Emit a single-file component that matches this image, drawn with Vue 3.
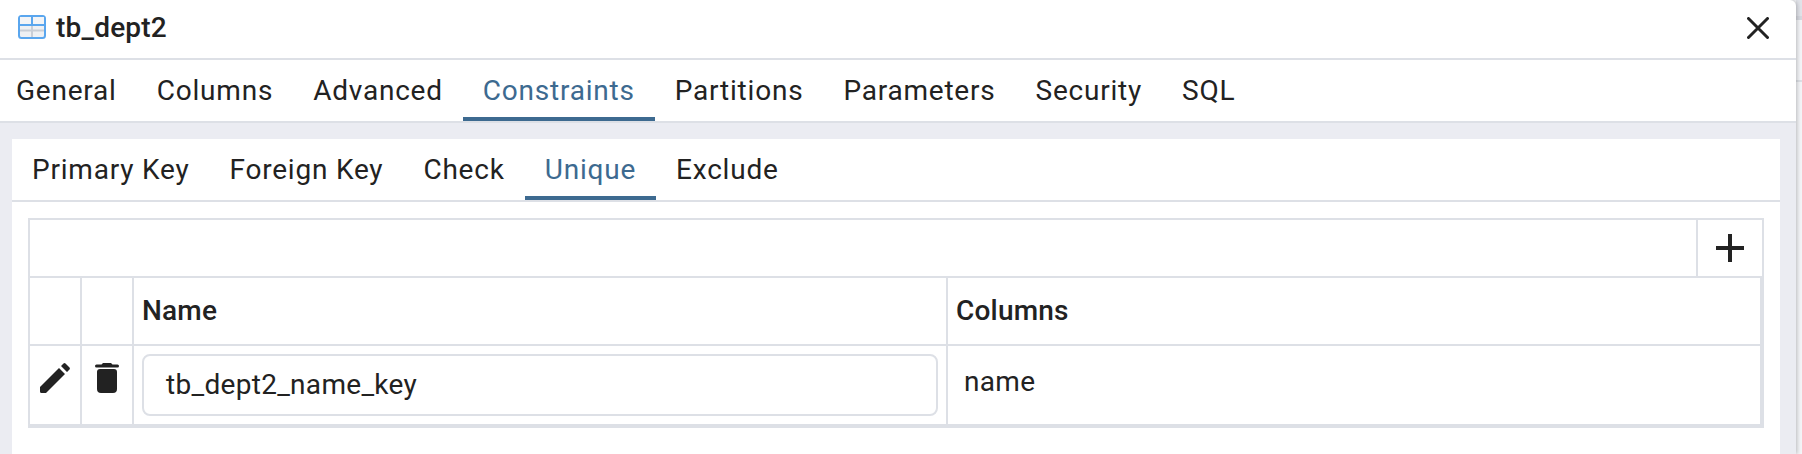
<script setup>
const mainTabs = ['General', 'Columns', 'Advanced', 'Constraints', 'Partitions', 'Parameters', 'Security', 'SQL']
const subTabs = ['Primary Key', 'Foreign Key', 'Check', 'Unique', 'Exclude']
</script>

<template>
  <div class="page">
    <section class="dialog">
      <header class="title-bar">
        <svg class="table-icon" width="28" height="24" viewBox="0 0 28 24">
          <rect x="1" y="1" width="26" height="22" rx="2.5" fill="#eef0f3" stroke="#5aa6ee" stroke-width="2" />
          <rect x="2" y="2" width="24" height="8" fill="#f3f4f6" />
          <path d="M14 2v8M2 10h24" stroke="#5aa6ee" stroke-width="2" fill="none" />
          <path d="M14 11v11M2 15.500h24" stroke="#c9ced6" stroke-width="2" fill="none" />
        </svg>
        <span class="title">tb_dept2</span>
        <svg class="close" width="22" height="22" viewBox="0 0 22 22">
          <path d="M1.5 1.5l19 19M20.500 1.500l-19 19" stroke="#222" stroke-width="3" stroke-linecap="round" />
        </svg>
      </header>
      <nav class="tabs main-tabs">
        <div v-for="t in mainTabs" :key="t" class="tab" :class="{ active: t === 'Constraints' }">{{ t }}</div>
      </nav>
      <main class="content">
        <div class="panel">
          <nav class="tabs sub-tabs">
            <div v-for="t in subTabs" :key="t" class="tab" :class="{ active: t === 'Unique' }">{{ t }}</div>
          </nav>
          <div class="grid-wrap">
            <div class="grid">
              <div class="toolbar">
                <div class="add">
                  <svg width="28" height="28" viewBox="0 0 28 28">
                    <path d="M12 0h4v12h12v4H16v12h-4V16H0v-4h12z" fill="#222" />
                  </svg>
                </div>
              </div>
              <div class="row head">
                <div class="cell icon-cell"></div>
                <div class="cell icon-cell"></div>
                <div class="cell name-cell label">Name</div>
                <div class="cell col-cell label">Columns</div>
              </div>
              <div class="row body">
                <div class="cell icon-cell action">
                  <svg width="30" height="30" viewBox="0 0 30 30">
                    <path d="M0 24 19 5l6 6L6 30H1.500Q0 30 0 28.500zM21 3l2.500-2.500q1-.8 2 0l4 4q.8 1 0 2L27 9z" fill="#222" />
                  </svg>
                </div>
                <div class="cell icon-cell action">
                  <svg width="24" height="30" viewBox="0 0 24 30">
                    <path d="M8 0h8l1.500 1.500h5q1.500 0 1.500 1.500t-1.500 1.500h-21Q0 4.500 0 3t1.500-1.500h5zM2 9q0-3 3-3h14q3 0 3 3v17q0 4-4 4H6q-4 0-4-4z" fill="#222" />
                  </svg>
                </div>
                <div class="cell name-cell input-cell">
                  <div class="input">tb_dept2_name_key</div>
                </div>
                <div class="cell col-cell value">name</div>
              </div>
            </div>
          </div>
        </div>
      </main>
    </section>
    <aside class="backdrop">
      <div class="backdrop-head"></div>
      <div class="backdrop-line"></div>
    </aside>
  </div>
</template>

<style>
html, body { margin: 0; background: #f4f5f8; }
</style>

<style scoped>
.page {
  width: 1802px;
  height: 454px;
  overflow: hidden;
  display: flex;
  font-family: Roboto, "Liberation Sans", sans-serif;
  color: #222;
}
.dialog {
  width: 1796px;
  height: 454px;
  flex: none;
  position: relative;
  z-index: 1;
  display: flex;
  flex-direction: column;
  background: #fff;
  border-top-right-radius: 6px;
  box-shadow: 1px 0 4px rgba(0, 0, 0, 0.25);
}
.backdrop { flex: 1; }
.backdrop-head {
  height: 16px;
  background: #e1e3e9;
  border-bottom: 4px solid #d6d8df;
}
.backdrop-line {
  height: 2px;
  margin-top: 60px;
  background: #dde0e6;
}
.title-bar {
  height: 54px;
  flex: none;
  display: flex;
  align-items: center;
  padding: 0 27px 4px 18px;
  border-bottom: 2px solid #dde0e6;
}
.table-icon { margin-right: 10px; }
.title { font-size: 28px; font-weight: 500; letter-spacing: 0.2px; flex: 1; }
.close { margin-top: 2px; }
.tabs { display: flex; flex: none; }
.tab {
  font-size: 28px;
  letter-spacing: 0.785px;
  padding: 0 20px;
  border-bottom: 4px solid transparent;
  white-space: nowrap;
}
.tab.active { color: #3d6a90; border-bottom-color: #3d6a90; }
.main-tabs {
  height: 61px;
  border-bottom: 2px solid #dde0e6;
}
.main-tabs .tab { line-height: 61px; height: 57px; }
.main-tabs .tab:first-child { padding-left: 16px; }
.content {
  flex: 1;
  background: #ebecf2;
  padding: 16px 16px 0 12px;
  display: flex;
  min-height: 0;
}
.panel { flex: 1; background: #fff; }
.sub-tabs {
  height: 61px;
  border-bottom: 2px solid #dde0e6;
}
.sub-tabs .tab { line-height: 61px; height: 57px; }
.grid-wrap { padding: 16px 16px 0; }
.grid {
  border: 2px solid #dde0e6;
  border-bottom-width: 4px;
}
.toolbar {
  height: 56px;
  display: flex;
  justify-content: flex-end;
  border-bottom: 2px solid #dde0e6;
}
.add {
  width: 64px;
  border-left: 2px solid #dde0e6;
  display: flex;
  align-items: center;
  justify-content: center;
}
.row {
  display: flex;
  border-right: 2px solid #dde0e6;
}
.head { height: 66px; border-bottom: 2px solid #dde0e6; }
.body { height: 78px; }
.cell { border-right: 2px solid #dde0e6; flex: none; box-sizing: border-box; }
.cell:last-child { border-right: 0; }
.icon-cell { width: 52px; }
.name-cell { width: 814px; }
.col-cell { flex: 1; }
.label {
  font-size: 28px;
  font-weight: 500;
  letter-spacing: 0.2px;
  line-height: 66px;
  padding-left: 8px;
}
.action { display: flex; justify-content: center; padding-top: 17px; }
.input-cell { padding: 8px; }
.input {
  height: 62px;
  box-sizing: border-box;
  border: 2px solid #dde0e6;
  border-radius: 8px;
  padding-left: 22px;
  font-size: 28px;
  letter-spacing: 0.3px;
  line-height: 58px;
}
.value {
  font-size: 28px;
  letter-spacing: 0.3px;
  line-height: 62px;
  padding: 5px 0 0 16px;
}
</style>
